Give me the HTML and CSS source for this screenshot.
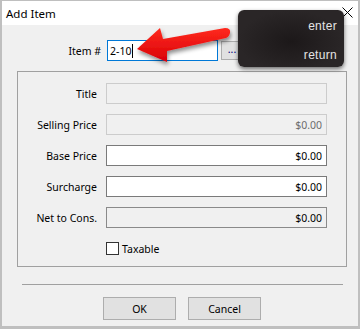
FILE: index.html
```html
<!DOCTYPE html>
<html lang="en">
<head>
  <meta charset="UTF-8" />
  <title>Add Item</title>
  <link rel="stylesheet" href="styles.css">
</head>
<body>
  <div class="window">
    <div class="titlebar">
      <span class="title">Add Item</span>
      <svg class="close" width="11" height="11" viewBox="0 0 11 11">
        <path d="M0.5 0.5 L10.5 10.5 M10.5 0.5 L0.5 10.5" stroke="#000" stroke-width="1" fill="none" />
      </svg>
    </div>

    <div class="content">
      <div class="item-row">
        <span class="item-label">Item #</span>
        <div class="field focus">2-10<span class="caret"></span></div>
        <div class="browse">...</div>
      </div>

      <div class="group">
        <span class="label">Title</span>
        <div class="field disabled"></div>

        <span class="label">Selling Price</span>
        <div class="field disabled num">$0.00</div>

        <span class="label">Base Price</span>
        <div class="field num">$0.00</div>

        <span class="label">Surcharge</span>
        <div class="field num">$0.00</div>

        <span class="label">Net to Cons.</span>
        <div class="field readonly num">$0.00</div>

        <span class="label"></span>
        <div class="check-row"><span class="checkbox"></span>Taxable</div>
      </div>

      <div class="separator"></div>

      <div class="buttons">
        <div class="btn">OK</div>
        <div class="btn">Cancel</div>
      </div>
    </div>
  </div>

  <!-- key hint popup lying over the dialog -->
  <div class="hint">
    <div class="key">enter</div>
    <div class="key">return</div>
  </div>

  <svg class="arrow" width="110" height="50" viewBox="130 22 110 50">
    <defs>
      <linearGradient id="red" x1="0" y1="0" x2="0" y2="1">
        <stop offset="0" stop-color="#ff2a1e" />
        <stop offset="1" stop-color="#d80008" />
      </linearGradient>
      <filter id="shade" x="-20%" y="-30%" width="140%" height="170%">
        <feDropShadow dx="1" dy="3" stdDeviation="2" flood-color="#000" flood-opacity="0.45" />
      </filter>
    </defs>
    <path d="M137 49 L160 28 L163 39 L225 28 Q231 28 230 33 Q229 37 226 38 L167 51 L167 62 Z"
          fill="url(#red)" filter="url(#shade)" />
  </svg>
</body>
</html>
```

FILE: styles.css
```css
html, body {
  margin: 0;
  padding: 0;
}

body {
  position: relative;
  width: 360px;
  height: 329px;
  overflow: hidden;
  font-family: "Noto Sans", "Liberation Sans", sans-serif;
  font-size: 10.5px;
  color: #000;
}

.window {
  box-sizing: border-box;
  width: 360px;
  height: 329px;
  border-style: solid;
  border-color: #bfbfbf;
  border-width: 1px 2px 3px 2px;
  background: #f0f0f0;
}

.titlebar {
  height: 24px;
  background: #fff;
  display: flex;
  align-items: center;
  justify-content: space-between;
  padding: 0 5px 0 4px;
}

.title {
  font-size: 11.5px;
}

.close {
  display: block;
  margin-top: -1px;
}

.item-row {
  display: flex;
  align-items: center;
  margin-top: 15px;
  height: 21px;
}

.item-label {
  width: 99px;
  text-align: right;
  margin-right: 6px;
}

.field {
  box-sizing: border-box;
  height: 21px;
  border: 1px solid #7a7a7a;
  background: #fff;
  display: flex;
  align-items: center;
  padding: 0 4px;
}

.field.focus {
  width: 111px;
  border-color: #0078d7;
  padding-left: 2px;
}

.caret {
  display: inline-block;
  width: 1px;
  height: 14px;
  background: #000;
  margin-left: 1px;
}

.browse {
  box-sizing: border-box;
  width: 22px;
  height: 19px;
  margin-left: 3px;
  border: 1px solid #adadad;
  background: #e1e1e1;
  color: #000080;
  text-align: center;
  line-height: 15px;
}

.group {
  margin: 10px 0 0 15px;
  width: 330px;
  box-sizing: border-box;
  border: 1px solid #a0a0a0;
  padding: 11px 19px 7px 0;
  display: grid;
  grid-template-columns: 79px 221px;
  grid-auto-rows: 21px;
  column-gap: 9px;
  row-gap: 10px;
  align-items: center;
}

.label {
  text-align: right;
}

.field.num {
  justify-content: flex-end;
}

.field.disabled {
  border-color: #cccccc;
  background: #f0f0f0;
  color: #6d6d6d;
}

.field.readonly {
  border-color: #8a8a8a;
  background: #f0f0f0;
}

.check-row {
  display: flex;
  align-items: center;
}

.checkbox {
  box-sizing: border-box;
  width: 13px;
  height: 13px;
  border: 1px solid #333;
  background: #fff;
  margin-right: 3px;
}

.separator {
  margin: 17px 0 0 20px;
  width: 321px;
  height: 1px;
  background: #a0a0a0;
}

.buttons {
  display: flex;
  gap: 12px;
  margin: 12px 0 0 101px;
}

.btn {
  box-sizing: border-box;
  width: 73px;
  height: 23px;
  border: 1px solid #adadad;
  background: #e1e1e1;
  display: flex;
  align-items: center;
  justify-content: center;
}

.hint {
  position: absolute;
  left: 238px;
  top: 10px;
  width: 106px;
  height: 57px;
  box-sizing: border-box;
  border-radius: 6px;
  background: radial-gradient(ellipse at 50% 55%, #1c1819 0%, #2a2627 70%);
  box-shadow: 0 2px 4px rgba(0, 0, 0, 0.55);
  padding: 8px 7px 0 0;
  display: flex;
  flex-direction: column;
  align-items: flex-end;
  gap: 12px;
  font-family: "Liberation Sans", "DejaVu Sans", sans-serif;
  font-size: 12px;
  color: #e4e4e4;
}

.key {
  line-height: 17px;
  letter-spacing: 0.3px;
}

.arrow {
  position: absolute;
  left: 130px;
  top: 22px;
}
```
